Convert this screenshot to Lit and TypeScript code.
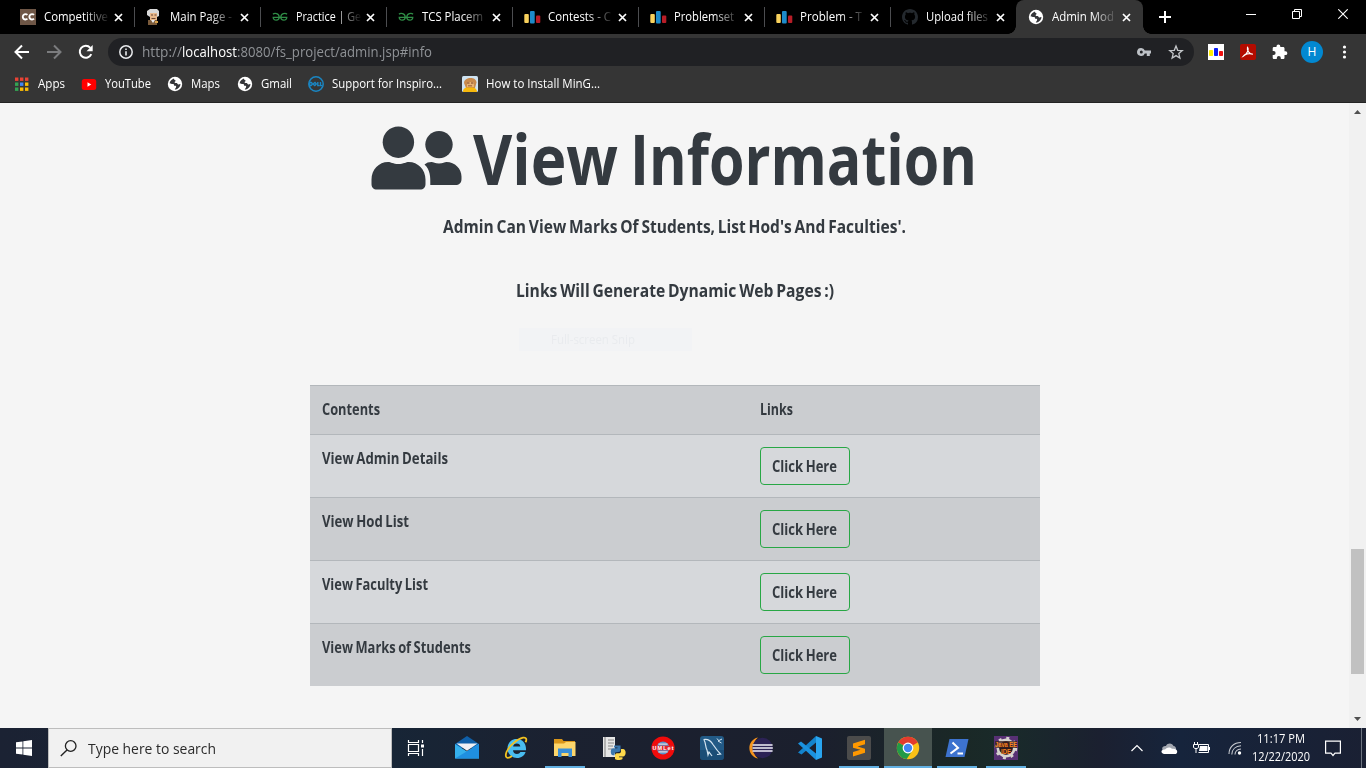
import { LitElement, html, svg, css } from "lit";
import { customElement, property } from "lit/decorators.js";
import { styleMap } from "lit/directives/style-map.js";
import { classMap } from "lit/directives/class-map.js";

/** One line of text condensed or widened to take exactly `w` pixels. */
@customElement("fit-text")
class FitText extends LitElement {
  static styles = css`
    :host { display: block; flex: none; white-space: nowrap; }
    .t { display: inline-block; transform-origin: 0 50%; vertical-align: top; }
  `;
  @property({ type: Number }) w = 0;
  @property() text = "";
  firstUpdated() {
    const span = this.renderRoot.querySelector(".t") as HTMLElement;
    const natural = span.getBoundingClientRect().width;
    this.style.width = this.w + "px";
    if (natural > 0) span.style.transform = `scaleX(${this.w / natural})`;
  }
  render() {
    return html`<span class="t">${this.text}</span>`;
  }
}

const icon = (w: number, h: number, body: unknown, vb = `0 0 ${w} ${h}`) =>
  html`<svg width=${w} height=${h} viewBox=${vb} fill="none" style="display:block;flex:none">${body}</svg>`;

const globe = icon(16, 16, svg`
  <circle cx="8" cy="8" r="7.200" fill="#fff"/>
  <path d="M7 2.400C5 3 3 4.600 2.600 7.200c1.200.6 1.800.8 3.200.8.900 0 1.200.6 1.200 1.200 0 .800.900.600 1.600.600.600 0 .700.900.400 1.600C8.700 12.400 7.900 12.600 7.800 13.600 10.200 13.500 13.400 11.500 13.500 8c-1 .200-1.400.500-2.200.500-.800 0-.700-1-1.500-1.400-.800-.300-2.200.200-2.200-.900 0-.800 1-.700 1-1.400C8.600 3.900 6.800 3.900 7 2.400z" fill="#35363a"/>`);

const bars = icon(18, 16, svg`
  <rect x=".3" y="5" width="4.500" height="9" rx="1" fill="#f8d15c"/>
  <rect x="6" y="2" width="4.700" height="12.500" rx="1" fill="#1d8bca"/>
  <rect x="12" y="6.500" width="4.300" height="7.500" rx="1" fill="#b71d27"/>`);

const gfg = icon(16, 16, svg`
  <g stroke="#2f8d46" stroke-width="1.300">
    <path d="M1 5.200c1.200-1.300 6.200-1.500 6.200 3C7.200 12 1.200 12 1.200 8.300h13.600C14.800 12 8.800 12 8.800 8.200c0-4.500 5-4.300 6.200-3"/>
  </g>`);

const cc = icon(16, 16, svg`
  <rect width="16" height="16" fill="#6e5646"/>
  <path d="M7.400 5.900A2.700 2.700 0 1 0 7.400 9.700M14 5.900A2.700 2.700 0 1 0 14 9.700" stroke="#fff" stroke-width="1.900"/>`);

const oldMan = icon(16, 16, svg`
  <path d="M1 2l3-2h7l2 2v5l-2 1H4L1 6z" fill="#d9d9d9"/>
  <path d="M4 4h7v7H4z" fill="#e9b98c"/>
  <path d="M5 5.500h2v1H5zM8.500 5.500h2v1h-2zM5.500 9h4v1h-4z" fill="#6b4632"/>
  <path d="M2 11h9v5H2z" fill="#7a5a3a"/>
  <path d="M5 11h4l-2 3z" fill="#eee"/><path d="M9 12h3v2H9z" fill="#d8a24a"/>`);

const github = icon(16, 16, svg`
  <path fill="#24292e" d="M8 0C3.580 0 0 3.580 0 8c0 3.540 2.290 6.530 5.470 7.590.4.070.55-.17.55-.38 0-.19-.01-.82-.01-1.490-2.010.37-2.530-.49-2.690-.94-.09-.23-.48-.94-.82-1.130-.28-.15-.68-.52-.01-.53.63-.01 1.080.58 1.230.82.72 1.210 1.870.87 2.330.66.07-.52.28-.87.51-1.070-1.780-.2-3.640-.89-3.640-3.950 0-.87.31-1.590.82-2.150-.08-.2-.36-1.020.08-2.120 0 0 .67-.21 2.200.82.64-.18 1.320-.27 2-.27s1.360.09 2 .27c1.530-1.040 2.200-.82 2.200-.82.44 1.100.16 1.920.08 2.120.51.56.82 1.270.82 2.150 0 3.070-1.870 3.750-3.650 3.950.29.25.54.73.54 1.480 0 1.070-.01 1.930-.01 2.200 0 .21.15.46.55.38A8.010 8.010 0 0 0 16 8c0-4.420-3.580-8-8-8z"/>`);

const closeX = icon(9, 9, svg`<path d="M1 1l7 7M8 1L1 8" stroke="#fff" stroke-width="1.700"/>`);

const tabs = [
  { ic: cc, t: "Competitive", w: 64 },
  { ic: oldMan, t: "Main Page -", w: 62 },
  { ic: gfg, t: "Practice | Ge", w: 65 },
  { ic: gfg, t: "TCS Placem", w: 61 },
  { ic: bars, t: "Contests - C", w: 63 },
  { ic: bars, t: "Problemset", w: 60 },
  { ic: bars, t: "Problem - T", w: 62 },
  { ic: github, t: "Upload files", w: 62 },
  { ic: globe, t: "Admin Mod", w: 62, on: true },
];

const appsGrid = icon(16, 16, svg`
  ${[["#e94335", "#e94335", "#e94335"], ["#34a353", "#4285f4", "#fbbc05"], ["#34a353", "#fbbc05", "#fbbc05"]].map((r, y) =>
    r.map((c, x) => svg`<rect x=${1 + x * 5} y=${1.5 + y * 5} width="3.400" height="3.400" fill=${c}/>`))}`);

const youtube = icon(16, 16, svg`
  <rect x=".8" y="3" width="14.400" height="11" rx="2.500" fill="#f00"/><path d="M6.500 6.200v4.600l3.800-2.300z" fill="#fff"/>`);

const dell = icon(16, 16, svg`
  <circle cx="8" cy="8" r="7.200" stroke="#1a86c3" stroke-width="1.500"/>
  <path d="M1.800 6v4M1.800 6.200c3-.6 3 4 0 3.600M5 8l2-1.600L8.300 8 6.800 9.600zM9.800 6v3.600h1.800M12.500 6v3.600h1.800" stroke="#1a86c3" stroke-width="1.400"/>`);

const face = icon(16, 16, svg`
  <rect width="16" height="16" rx="1.500" fill="#cfe3f2"/>
  <path d="M2 7c0-6 12-7 12.500-.5L13 12H4z" fill="#c98a4b"/>
  <path d="M5 6h7v5H5z" fill="#e7b273"/><path d="M5 6.500h2.500v1H5zM9 6.500h2.500v1H9zM6 9.500h4v.8H6z" fill="#7a3f22"/>
  <path d="M1 16c0-5 4-4.500 7-4.500s7 0 7 4.500z" fill="#f6b80c"/>`);

const bookmarks = [
  { ic: appsGrid, t: "Apps", w: 27, cell: 67 },
  { ic: youtube, t: "YouTube", w: 46, cell: 86 },
  { ic: globe, t: "Maps", w: 29, cell: 70 },
  { ic: globe, t: "Gmail", w: 31, cell: 71 },
  { ic: dell, t: "Support for Inspiro...", w: 110, cell: 154 },
  { ic: face, t: "How to Install MinG...", w: 114, cell: 150 },
];

const back = icon(16, 16, svg`<path d="M15 8H2M8 1.500L1.500 8 8 14.500" stroke="#fff" stroke-width="2"/>`);
const fwd = icon(16, 16, svg`<path d="M1 8h13M8 1.500L14.500 8 8 14.500" stroke="#7b7c7e" stroke-width="2"/>`);
const reload = icon(16, 16, svg`
  <path d="M13.300 10.200A6 6 0 1 1 12.300 3.800" stroke="#fff" stroke-width="2"/><path d="M14.700 1v6.200H8.500z" fill="#fff"/>`);
const info = icon(14, 14, svg`
  <circle cx="7" cy="7" r="6.200" stroke="#e8eaed" stroke-width="1.500"/>
  <path d="M7 6.200v4.300M7 3.500v1.500" stroke="#e8eaed" stroke-width="1.600"/>`);
const key = icon(14, 10, svg`
  <path fill="#bdc1c6" fill-rule="evenodd" d="M4.300 1a4 4 0 1 0 3.500 5.400h2V9h3V6.400H14V3.600H7.800A4 4 0 0 0 4.300 1zm0 2.500a1.500 1.500 0 1 1 0 3 1.500 1.500 0 0 1 0-3z"/>`);
const star = icon(16, 16, svg`
  <path d="M8 2l1.700 4.300 4.600.3-3.500 3 1.100 4.500L8 11.600l-3.900 2.500 1.100-4.500-3.500-3 4.600-.3z" stroke="#c4c7ca" stroke-width="1.300"/>`);
const extBars = icon(16, 16, svg`
  <rect width="16" height="16" fill="#fff"/><rect x="1" y="6" width="4" height="6" rx=".8" fill="#ffee00"/>
  <rect x="6" y="4" width="4" height="8" rx=".8" fill="#0a1cf5"/><rect x="11" y="7" width="4" height="5" rx=".8" fill="#f01212"/>`);
const acrobat = icon(16, 16, svg`
  <rect width="16" height="16" rx="2" fill="#b30b00"/>
  <path d="M7.500 3.500c1.800 2-.8 7-4.300 8.800 1.500-2.300 6-3.400 9.600-2.100C10 10.500 6.600 6.500 7.500 3.500z" stroke="#fff" stroke-width="1.200"/>`);
const puzzle = icon(16, 16, svg`
  <path fill="#fff" d="M13.500 7.300h-1V4.500c0-.8-.6-1.400-1.400-1.400H8.300v-.8a1.900 1.900 0 0 0-3.800 0v.8H2c-.8 0-1.300.6-1.300 1.400V7h.9a2 2 0 0 1 0 4H.7v2.700c0 .8.6 1.400 1.400 1.400h2.700v-1a2 2 0 0 1 4 0v1h2.300c.8 0 1.400-.6 1.400-1.400V11h1a1.850 1.850 0 0 0 0-3.700z"/>`);

const people = icon(91, 65, svg`
  <g fill="#343a40">
    <circle cx="398.400" cy="142.200" r="15.700"/>
    <circle cx="439" cy="144.600" r="13.700"/>
    <path d="M371.500 184v-4.500c0-10 7.500-17.500 16.500-17.500 3 0 5 2 10.400 2s7.400-2 10.400-2c9 0 16.700 7.500 16.700 17.500v4.500c0 3.500-2 5.500-5.500 5.500h-43c-3.500 0-5.500-2-5.500-5.500z"/>
    <path d="M424.500 164.500c2-1.700 4-2.500 7-2.500 2 0 3.500 1.500 7.500 1.500s5.500-1.500 7.500-1.500c8.500 0 15 7 15 14.500v2.500c0 4-2.500 6-6 6h-25.200c.2-8.500 0-15-5.800-20.500z"/>
  </g>`, "371 126 91 65");

const winLogo = icon(16, 16, svg`
  <path fill="#fff" d="M0 2.300l6.500-.9v6.200H0zM7.300 1.300L16 0v7.600H7.300zM0 8.400h6.500v6.200L0 13.700zM7.300 8.400H16V16l-8.700-1.300z"/>`);
const glass = icon(17, 17, svg`
  <circle cx="10.700" cy="6" r="5.300" stroke="#222" stroke-width="1.300"/><path d="M7 9.900L.8 16" stroke="#222" stroke-width="1.400"/>`);
const taskView = icon(18, 16, svg`
  <path d="M1.500 0v2.500h10V0M1.500 16v-2.500h10V16M1.500 4.500h10v7h-10zM15.500 0v3M15.500 9v7" stroke="#fff" stroke-width="1.200"/>
  <path d="M14 4.500h3v3h-3z" fill="#fff"/>`);
const mail = icon(24, 24, svg`
  <path d="M0 8L12 0l12 8v4H0z" fill="#0f5fa8"/>
  <path d="M0 8l12 7.500L24 8v14.500H0z" fill="#35b0ec"/><path d="M0 22.500L24 8v14.500z" fill="#1f8fe0"/>
  <path d="M1.500 7.500h21L12 14.800z" fill="#f1f1f4"/>`);
const ie = icon(24, 24, svg`
  <path fill="#49bdf0" fill-rule="evenodd" d="M12.500 3C7 3 3.500 7.300 3.500 12.500S7.500 22 13 22c4.500 0 7.500-2.500 8.600-6h-5.200c-.7 1.300-1.800 1.900-3.400 1.900-2.400 0-3.900-1.400-4-3.700h13C22.500 7.500 18.500 3 12.500 3zM9.100 10.600c.3-2 1.700-3.100 3.700-3.100s3.400 1.200 3.500 3.100z"/>
  <path d="M8 20c-5 3.500-7.500 1.500-5.500-4C5 10 13 3 19 1.700c3.500-.7 4 1.800 2.500 4.500" stroke="#f3c220" stroke-width="1.800"/>`);
const folder = icon(22, 20, svg`
  <path d="M0 1h8l1.500 2H21v5H0z" fill="#d9961a"/><path d="M0 5.500h10L12 4h9.500v14H0z" fill="#fdd66b"/>
  <path d="M4 19v-8.500h14V19h-3.500v-4h-7v4z" fill="#3a8fd8"/>`);
const python = icon(24, 24, svg`
  <path d="M1 1h12v20H1z" fill="#e6e6e6"/><path d="M3 1v20M6 4h6M6 7h6M6 10h5M6 13h4" stroke="#888" stroke-width="1.100"/>
  <path d="M12 9.500h6.500V14c0 2-1.500 2-4 2.200-2 .2-2 1.500-2 3H11c-3 0-3-7 0-7h4.500v-.7H12z" fill="#3a76ad"/>
  <path d="M19 13h2c3.500 0 3.500 7.500 0 7.500h-4v.7h3.500V23c-2 1.300-6 1.300-7.500 0v-3.500c0-2 1.500-2.200 3-2.200 2.500 0 3-.8 3-2.300z" fill="#ffd94a"/>`);
const umlet = icon(24, 24, svg`
  <circle cx="12" cy="12" r="11.600" fill="#f00b0b"/><circle cx="12" cy="12" r="6.500" fill="#5b93c9"/>
  <path d="M7.500 8.200h9M7.500 15.800h9" stroke="#e6d5dc" stroke-width="1.300"/>
  <path d="M2 9.700h20v4.600H2z" fill="#e2252c"/>
  <text x="1.500" y="14" font-size="5.500" font-weight="700" textLength="21" font-family="Liberation Sans, sans-serif" fill="#fff">UMLet</text>`);
const mysql = icon(24, 24, svg`
  <rect width="24" height="24" rx="3" fill="#225a86"/><path d="M0 14h24v7q0 3-3 3H3q-3 0-3-3z" fill="#18456c" opacity=".6"/>
  <path d="M3.500 3.500c4-.8 7.500 1.500 9.500 5 2 3 4 6 7.500 9.500l-3.500.5M4 4c2 3 1 6 3 10l1 5 1-3 3 4" stroke="#d6e6f2" stroke-width="1.200"/>
  <path d="M17 2.500l1.800 2.200M22 3l-4 2 3.500 2" stroke="#d6e6f2" stroke-width="1"/>`);
const eclipse = icon(24, 24, svg`
  <path d="M9 1.500C-2.500 4-2.500 20 9 22.500 3 18 3 6 9 1.500z" fill="#f7941e"/>
  <circle cx="13.500" cy="12" r="10.200" fill="#2c2255"/>
  <path d="M3.600 9h20M3.500 12h20.300M3.600 15h20" stroke="#f0eef8" stroke-width="1.500"/>`);
const vscode = icon(24, 24, svg`
  <path d="M18 0l6 2.500v19L18 24z" fill="#29a5f0"/><path d="M18 0v6.500L3.500 18.500 0 16.500z" fill="#1383cc"/>
  <path d="M18 24v-6.500L3 5.500 0 7.500z" fill="#1b92df"/>`);
const sublime = icon(24, 24, svg`
  <rect width="24" height="24" rx="2" fill="#4b4b4b"/>
  <path d="M6 7.500l12-3.700v4.500L10.500 10.600 18 12.800v4L6 20.500V16l7.500-2.200L6 11.800z" fill="#ff9800"/>`);
const chrome = icon(24, 24, svg`
  <circle cx="12" cy="12" r="11.200" fill="#fbc116"/>
  <path d="M12 12L2.300 6.400A11.200 11.200 0 0 1 21.700 6.400z" fill="#e33b2e"/>
  <path d="M12 12L2.300 6.400a11.200 11.200 0 0 0 8.400 16.700L16 15z" fill="#229a48"/>
  <circle cx="12" cy="12" r="5.400" fill="#fff"/><circle cx="12" cy="12" r="4.200" fill="#4285f4"/>`);
const powershell = icon(24, 20, svg`
  <path d="M4.500 1h19L19.500 19H.5z" fill="#3d73cf"/>
  <path d="M7.500 4.500l5.500 5.300-7.500 5.700M12.500 15.500h5.500" stroke="#fff" stroke-width="2"/>`);
const javaee = icon(24, 24, svg`
  <rect width="24" height="24" fill="#573074"/><circle cx="12" cy="12" r="8" stroke="#d6d3cf" stroke-width="3"/>
  <circle cx="12" cy="12" r="10" stroke="#d6d3cf" stroke-width="2.500" stroke-dasharray="3 4.850"/>
  <circle cx="12" cy="12" r="6.800" fill="#2c1a1e"/><path d="M1 5h22v7H1z" fill="#3a2020" opacity=".75"/>
  <g font-family="Liberation Sans, sans-serif" font-weight="700" font-size="7.500" fill="#fa8420">
    <text x="1" y="11.200" textLength="22" lengthAdjust="spacingAndGlyphs">Java EE</text>
    <text x="7" y="18" textLength="10" lengthAdjust="spacingAndGlyphs">IDE</text>
  </g>`);

const tasks = [
  { ic: mail }, { ic: ie }, { ic: folder, run: true }, { ic: python }, { ic: umlet }, { ic: mysql },
  { ic: eclipse }, { ic: vscode }, { ic: sublime, run: true }, { ic: chrome, run: true, on: true },
  { ic: powershell, run: true }, { ic: javaee, run: true },
];

const rows = ["View Admin Details", "View Hod List", "View Faculty List", "View Marks of Students"];
const rowWidths = [126, 87, 106, 149];

@customElement("app-root")
class AppRoot extends LitElement {
  static styles = css`
    :host {
      display: flex; flex-direction: column; width: 1366px; height: 768px; overflow: hidden;
      background: #f5f5f5; font-family: "Open Sans", "Noto Sans", sans-serif; font-size: 12px; color: #fff;
    }
    * { box-sizing: border-box; }
    .row { display: flex; align-items: center; }

    .tabs { height: 34px; background: #000; padding-left: 8px; display: flex; flex: none; }
    .tab { width: 126px; height: 34px; display: flex; align-items: center; padding-left: 12px; flex: none; position: relative; }
    .tab.sep::after { content: ""; position: absolute; right: -1px; top: 7px; width: 1px; height: 20px; background: #4c4d50; }
    .tab.on { background: #353535; border-radius: 8px 8px 0 0; width: 127px; }
    .tab.on::before, .tab.on::after { content: ""; position: absolute; bottom: 0; width: 8px; height: 8px; }
    .tab.on::before { left: -8px; background: radial-gradient(circle at 0 0, transparent 7.500px, #353535 8px); }
    .tab.on::after { right: -8px; background: radial-gradient(circle at 100% 0, transparent 7.500px, #353535 8px); }
    .fav { width: 24px; flex: none; }
    .label { width: 66px; overflow: hidden; line-height: 18px; flex: none;
      -webkit-mask-image: linear-gradient(90deg, #000 40px, transparent 66px);
      mask-image: linear-gradient(90deg, #000 40px, transparent 66px); }
    .x { margin-left: 4px; }
    .plus { margin: 11px 0 0 16px; }
    .win { margin-left: auto; display: flex; align-items: center; height: 28px; gap: 36px; padding-right: 18px; }

    .bar { height: 36px; background: #353535; flex: none; padding-left: 14px; }
    .nav { gap: 16px; width: 94px; }
    .omni { width: 1086px; height: 28px; border-radius: 14px; background: #202124; padding: 0 10px 0 11px; }
    .url { margin-left: 9px; font-size: 14px; color: #8f9296; line-height: 20px; }
    .host { color: #fff; }
    .omniend { margin-left: auto; gap: 17px; }
    .ext { margin-left: 14px; gap: 16px; }
    .avatar { width: 22px; height: 22px; border-radius: 50%; background: #0288d1; display: grid; place-items: center; margin: 0 -3px; font-size: 12px; line-height: 1; }
    .marks { height: 33px; background: #353535; border-bottom: 1px solid #232323; flex: none; padding: 0 0 4px 14px; }
    .mark { display: flex; align-items: center; gap: 8px; flex: none; line-height: 18px; }

    .view { flex: 1; display: flex; min-height: 0; }
    .page { width: 1349px; background: #f5f5f5; color: #343a40; display: flex; flex-direction: column; align-items: center; position: relative; }
    .title { margin-top: 23px; height: 64px; display: flex; gap: 11px; padding-right: 2px; font-size: 70px; font-weight: 700; line-height: 64px; }
    .words { display: flex; gap: 12px; }
    .sub { font-size: 18.500px; font-weight: 700; line-height: 24px; word-spacing: -1.500px; }
    .first { margin-top: 24px; }
    .second { margin-top: 40px; }
    .snip { position: absolute; left: 519px; top: 225px; width: 173px; height: 23px; background: #f2f3f5; color: #e9ebee; padding-left: 32px; line-height: 23px; font-size: 12px; }
    .table { width: 730px; margin-top: 83px; font-size: 15.500px; font-weight: 700; flex: none; word-spacing: -1px; }
    .tr { display: grid; grid-template-columns: 438px 292px; height: 63px; border-top: 1px solid #b3b7bb; background: #d6d8db; }
    .tr:nth-child(odd) { background: #cbcdd0; }
    .tr.head { height: 49px; }
    .td { padding: 12px; line-height: 22px; }
    .btn { display: flex; justify-content: center; align-items: center; width: 90px; height: 38px; padding-bottom: 1px; border: 1px solid #28a745; border-radius: 4px; }
    .scroll { width: 17px; background: #f1f1f1; display: flex; flex-direction: column; align-items: center; padding: 7px 0 7px; }
    .thumb { width: 13px; height: 125px; background: #c1c1c1; margin-top: 435px; }
    .down { margin-top: auto; }

    .task { height: 40px; flex: none; display: flex; align-items: center;
      background: linear-gradient(90deg, #1b2233 0, #172536 392px, #1b2130 560px, #1b1f2d 820px, #1a2826 960px, #192a2a 1010px, #1b2030 1100px, #16243c 1180px, #1a2033 1366px); }
    .start { width: 48px; display: grid; place-items: center; }
    .search { width: 344px; height: 40px; background: #f1f1f1; border: 1px solid #bdbdbd; display: flex; align-items: center; padding-left: 11px; gap: 11px; color: #2b2b2b; font-size: 14.500px; }
    .tv { width: 51px; display: grid; place-items: center; padding-right: 3px; }
    .apps { display: flex; gap: 1px; }
    .app { width: 48px; height: 40px; display: grid; place-items: center; background: no-repeat 50% 100% / 40px 2px; }
    .app.run { background-image: linear-gradient(#62b0e2, #62b0e2); }
    .app.on { background-color: #47534f; background-size: 48px 2px; }
    .tray { margin-left: auto; height: 40px; display: flex; align-items: center; }
    .clock { display: flex; flex-direction: column; align-items: center; line-height: 18px; margin: 0 15px 0 10px; }
    .peek { width: 5px; height: 40px; border-left: 1px solid #6d7480; margin-left: 20px; }
    .g15 { width: 15px; }
    .g18 { width: 18px; }
  `;

  render() {
    return html`
      <div class="tabs">
        ${tabs.map((t, i) => html`
          <div class=${classMap({ tab: true, on: !!t.on, sep: i < 7 })}>
            <div class="fav">${t.ic}</div>
            <div class="label"><fit-text .w=${t.w} .text=${t.t}></fit-text></div>
            <div class="x">${closeX}</div>
          </div>`)}
        <div class="plus">${icon(12, 12, svg`<path d="M6 0v12M0 6h12" stroke="#fff" stroke-width="2"/>`)}</div>
        <div class="win">
          ${icon(10, 10, svg`<path d="M0 5.500h10" stroke="#fff"/>`)}
          ${icon(10, 10, svg`<path d="M.5 2.500h7v7h-7zM2.500 2.500v-2h7v7h-2" stroke="#fff"/>`)}
          ${icon(10, 10, svg`<path d="M.3.3l9.400 9.400M9.700.3L.3 9.700" stroke="#fff" stroke-width="1.100"/>`)}
        </div>
      </div>

      <div class="bar row">
        <div class="nav row">${back}${fwd}${reload}</div>
        <div class="omni row">
          ${info}
          <div class="url row">
            <fit-text .w=${40} .text=${"http://"}></fit-text>
            <fit-text class="host" .w=${55} .text=${"localhost"}></fit-text>
            <fit-text .w=${195} .text=${":8080/fs_project/admin.jsp#info"}></fit-text>
          </div>
          <div class="omniend row">${key}${star}</div>
        </div>
        <div class="ext row">
          ${extBars}${acrobat}${puzzle}
          <div class="avatar">H</div>
          ${icon(16, 16, svg`<circle cx="8.500" cy="3" r="1.600" fill="#fff"/><circle cx="8.500" cy="8" r="1.600" fill="#fff"/><circle cx="8.500" cy="13" r="1.600" fill="#fff"/>`)}
        </div>
      </div>

      <div class="marks row">
        ${bookmarks.map((b) => html`
          <div class="mark" style=${styleMap({ width: b.cell + "px" })}>${b.ic}<fit-text .w=${b.w} .text=${b.t}></fit-text></div>`)}
      </div>

      <div class="view">
        <div class="page">
          <div class="title">${people}
            <div class="words">
              <fit-text .w=${145} .text=${"View"}></fit-text>
              <fit-text .w=${347} .text=${"Information"}></fit-text>
            </div>
          </div>
          <div class="sub first"><fit-text .w=${463} .text=${"Admin Can View Marks Of Students, List Hod's And Faculties'."}></fit-text></div>
          <div class="sub second"><fit-text .w=${318} .text=${"Links Will Generate Dynamic Web Pages :)"}></fit-text></div>
          <div class="table">
            <div class="tr head">
              <div class="td"><fit-text .w=${58} .text=${"Contents"}></fit-text></div>
              <div class="td"><fit-text .w=${33} .text=${"Links"}></fit-text></div>
            </div>
            ${rows.map((r, i) => html`
              <div class="tr">
                <div class="td"><fit-text .w=${rowWidths[i]} .text=${r}></fit-text></div>
                <div class="td"><div class="btn"><fit-text .w=${65} .text=${"Click Here"}></fit-text></div></div>
              </div>`)}
          </div>
          <div class="snip"><fit-text .w=${84} .text=${"Full-screen Snip"}></fit-text></div>
        </div>
        <div class="scroll">
          ${icon(7, 4, svg`<path d="M0 4l3.500-4L7 4z" fill="#505050"/>`)}
          <div class="thumb"></div>
          <div class="down">${icon(7, 4, svg`<path d="M0 0l3.500 4L7 0z" fill="#505050"/>`)}</div>
        </div>
      </div>

      <div class="task">
        <div class="start">${winLogo}</div>
        <div class="search">${glass}<fit-text .w=${128} .text=${"Type here to search"}></fit-text></div>
        <div class="tv">${taskView}</div>
        <div class="apps">
          ${tasks.map((a) => html`<div class=${classMap({ app: true, run: !!a.run, on: !!a.on })}>${a.ic}</div>`)}
        </div>
        <div class="tray">
          ${icon(12, 8, svg`<path d="M.5 7L6 1.500 11.500 7" stroke="#fff" stroke-width="1.200"/>`)}
          <div class="g18"></div>
          ${icon(17, 11, svg`<path d="M2 8C0 5 2 2.500 5 3c1.500-3.500 6.500-3 7.500 0 2 .3 3 2 2.500 4z" fill="#a3a7b0"/><path d="M3 11c-4-1-3-5 1-4.500 2-2.500 5-2.800 7-.7 3-.3 5 .7 5.200 2.700.1 1.300-1 2.500-2.400 2.500z" fill="#fff"/>`)}
          <div class="g15"></div>
          ${icon(17, 12, svg`<path d="M6 2.500h9.500v8h-10M16.500 5v3" stroke="#fff"/><path d="M7 4h7.500v5H6z" fill="#fff"/><path d="M1.500 0v2M4.500 0v2M.5 2.500h5v3l-1.500 1H2l-1.500-1zM3 6.500V11" stroke="#fff"/>`)}
          <div class="g18"></div>
          ${icon(14, 14, svg`<path d="M1 13C1 6 6 1.500 13 1.500M3.800 13.500C4 8.500 7.500 5 13 4.800M7 13.500c0-3 2.500-5.300 6-5.500" stroke="#c9ccd2" stroke-width="1.100"/><circle cx="11.500" cy="12" r="1.700" fill="#fff"/>`)}
          <div class="clock">
            <fit-text .w=${48} .text=${"11:17 PM"}></fit-text>
            <fit-text .w=${58} .text=${"12/22/2020"}></fit-text>
          </div>
          ${icon(16, 17, svg`<path d="M.6 1.100h14.800v12H10L8 15.500l-2-2.400H.6z" stroke="#fff" stroke-width="1.200"/>`)}
          <div class="peek"></div>
        </div>
      </div>`;
  }
}
